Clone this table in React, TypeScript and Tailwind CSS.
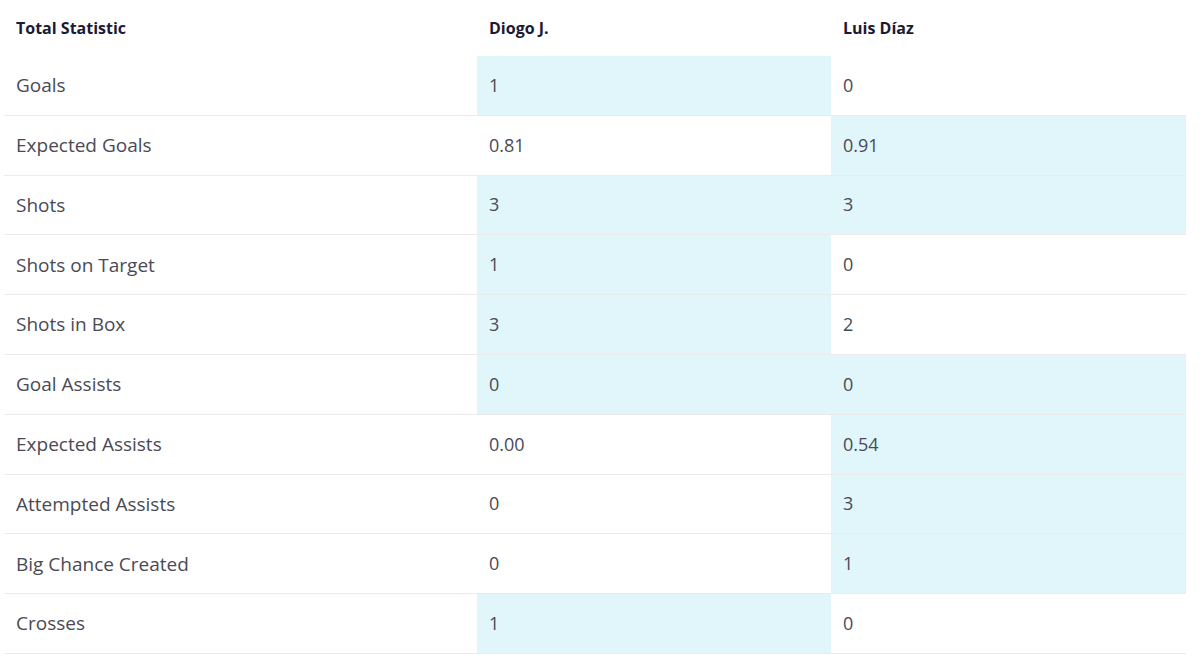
import React from "react";

type Row = { label: string; a: string; b: string; ha: boolean; hb: boolean };

const rows: Row[] = [
  { label: "Goals", a: "1", b: "0", ha: true, hb: false },
  { label: "Expected Goals", a: "0.81", b: "0.91", ha: false, hb: true },
  { label: "Shots", a: "3", b: "3", ha: true, hb: true },
  { label: "Shots on Target", a: "1", b: "0", ha: true, hb: false },
  { label: "Shots in Box", a: "3", b: "2", ha: true, hb: false },
  { label: "Goal Assists", a: "0", b: "0", ha: true, hb: true },
  { label: "Expected Assists", a: "0.00", b: "0.54", ha: false, hb: true },
  { label: "Attempted Assists", a: "0", b: "3", ha: false, hb: true },
  { label: "Big Chance Created", a: "0", b: "1", ha: false, hb: true },
  { label: "Crosses", a: "1", b: "0", ha: true, hb: false },
];

export default function App() {
  return (
    <div
      className="w-[1200px] h-[668px] bg-white overflow-hidden"
      style={{ fontFamily: "'Open Sans', Lato, sans-serif" }}
    >
      <div className="ml-1 w-[1182px]">
        <div className="grid grid-cols-[473px_354px_355px] h-[56px] items-center text-[16px] font-bold text-[#1c1a33]">
          <div className="pl-3">Total Statistic</div>
          <div className="pl-3">Diogo J.</div>
          <div className="pl-3">Luis Díaz</div>
        </div>
        {rows.map((r) => (
          <div
            key={r.label}
            className="grid grid-cols-[473px_354px_355px] h-[59.8px] border-b border-[#ebebeb] text-[18px] text-[#4a4a55]"
          >
            <div className="pl-3 flex items-center text-[19px]">{r.label}</div>
            <div className={`pl-3 flex items-center ${r.ha ? "bg-[#e0f6fa]" : ""}`}>{r.a}</div>
            <div className={`pl-3 flex items-center ${r.hb ? "bg-[#e0f6fa]" : ""}`}>{r.b}</div>
          </div>
        ))}
      </div>
    </div>
  );
}
